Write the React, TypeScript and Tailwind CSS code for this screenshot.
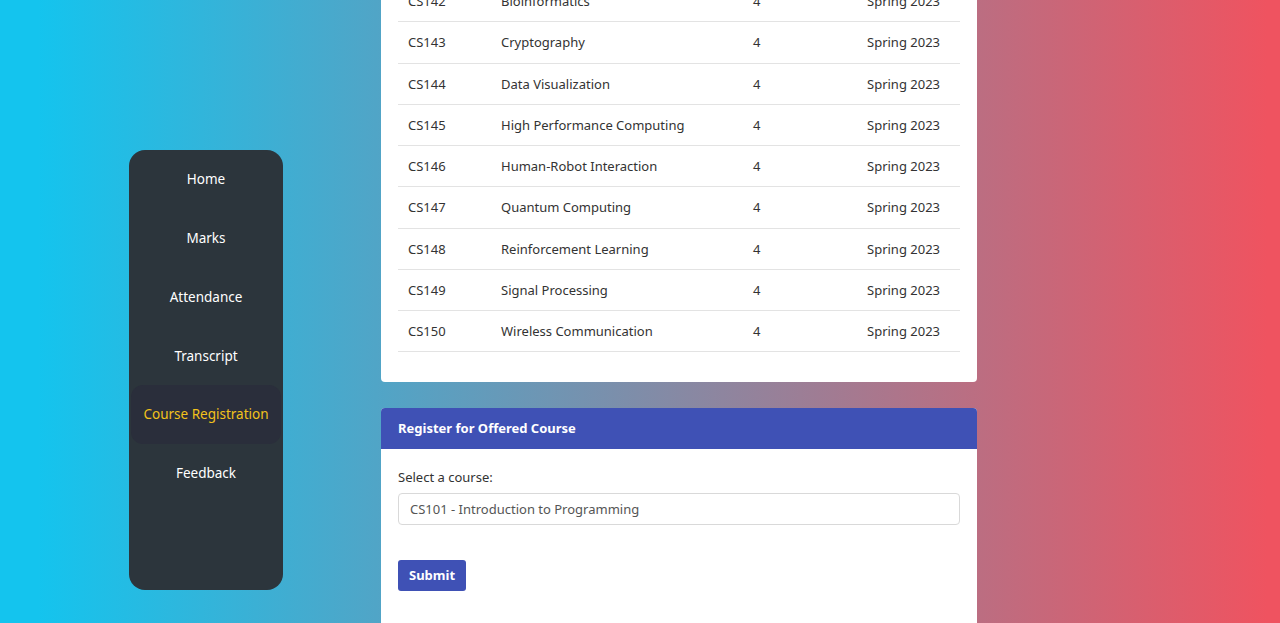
import React from 'react';

const navItems = ['Home', 'Marks', 'Attendance', 'Transcript', 'Course Registration', 'Feedback'];

const courses = [
  { code: 'CS142', name: 'Bioinformatics', credits: 4, semester: 'Spring 2023' },
  { code: 'CS143', name: 'Cryptography', credits: 4, semester: 'Spring 2023' },
  { code: 'CS144', name: 'Data Visualization', credits: 4, semester: 'Spring 2023' },
  { code: 'CS145', name: 'High Performance Computing', credits: 4, semester: 'Spring 2023' },
  { code: 'CS146', name: 'Human-Robot Interaction', credits: 4, semester: 'Spring 2023' },
  { code: 'CS147', name: 'Quantum Computing', credits: 4, semester: 'Spring 2023' },
  { code: 'CS148', name: 'Reinforcement Learning', credits: 4, semester: 'Spring 2023' },
  { code: 'CS149', name: 'Signal Processing', credits: 4, semester: 'Spring 2023' },
  { code: 'CS150', name: 'Wireless Communication', credits: 4, semester: 'Spring 2023' },
];

export default function App() {
  return (
    <div
      className="h-[623px] overflow-hidden bg-[linear-gradient(to_right,#14c4ee_3%,#ef5360_99%)] flex text-[#212529]"
      style={{ fontFamily: '"Noto Sans", "Open Sans", sans-serif' }}
    >
      {/* Sidebar */}
      <div className="ml-[129px] mt-[150px] w-[154px] h-[440px] shrink-0 bg-[#2c353c] rounded-[16px] flex flex-col">
        {navItems.map(item => (
          <div key={item} className="h-[58.8px] px-[2px] flex">
            <div
              className={
                item === 'Course Registration'
                  ? 'flex-1 flex items-center justify-center rounded-[12px] bg-[#2a2e3b] text-[#f2c21b] text-[13.5px]'
                  : 'flex-1 flex items-center justify-center text-white text-[13.5px]'
              }
            >
              {item}
            </div>
          </div>
        ))}
      </div>

      {/* Main content */}
      <div className="ml-[98px] w-[596px] shrink-0 flex flex-col">
        {/* Offered courses table */}
        <div className="-mt-[19px] bg-white rounded-b-[4px] px-[17px] pb-[30px]">
          <table className="w-full border-collapse text-[13px] text-[#333]">
            <colgroup>
              <col className="w-[93px]" />
              <col className="w-[252px]" />
              <col className="w-[114px]" />
              <col />
            </colgroup>
            <tbody>
              {courses.map(c => (
                <tr key={c.code} className="border-b border-[#e3e3e3]">
                  <td className="px-[10px] py-[10px] leading-[20.25px]">{c.code}</td>
                  <td className="px-[10px] py-[10px] leading-[20.25px]">{c.name}</td>
                  <td className="px-[10px] py-[10px] leading-[20.25px]">{c.credits}</td>
                  <td className="px-[10px] py-[10px] leading-[20.25px]">{c.semester}</td>
                </tr>
              ))}
            </tbody>
          </table>
        </div>

        {/* Register form */}
        <div className="mt-[26px] bg-white rounded-t-[4px] flex flex-col">
          <div className="h-[41px] bg-[#3f51b5] rounded-t-[4px] px-[17px] flex items-center text-white font-bold text-[13px]">
            Register for Offered Course
          </div>
          <div className="px-[17px] pt-[18px] pb-[40px]">
            <label className="block text-[13px] text-[#333] leading-[20px]">Select a course:</label>
            <div className="mt-[6px] h-[32px] border border-[#d9d9d9] rounded-[4px] px-[11px] flex items-center text-[13px] text-[#555]">
              CS101 - Introduction to Programming
            </div>
            <button className="mt-[35px] h-[31px] px-[11px] bg-[#3f51b5] text-white font-bold text-[13px] rounded-[3px]">
              Submit
            </button>
          </div>
        </div>
      </div>
    </div>
  );
}
